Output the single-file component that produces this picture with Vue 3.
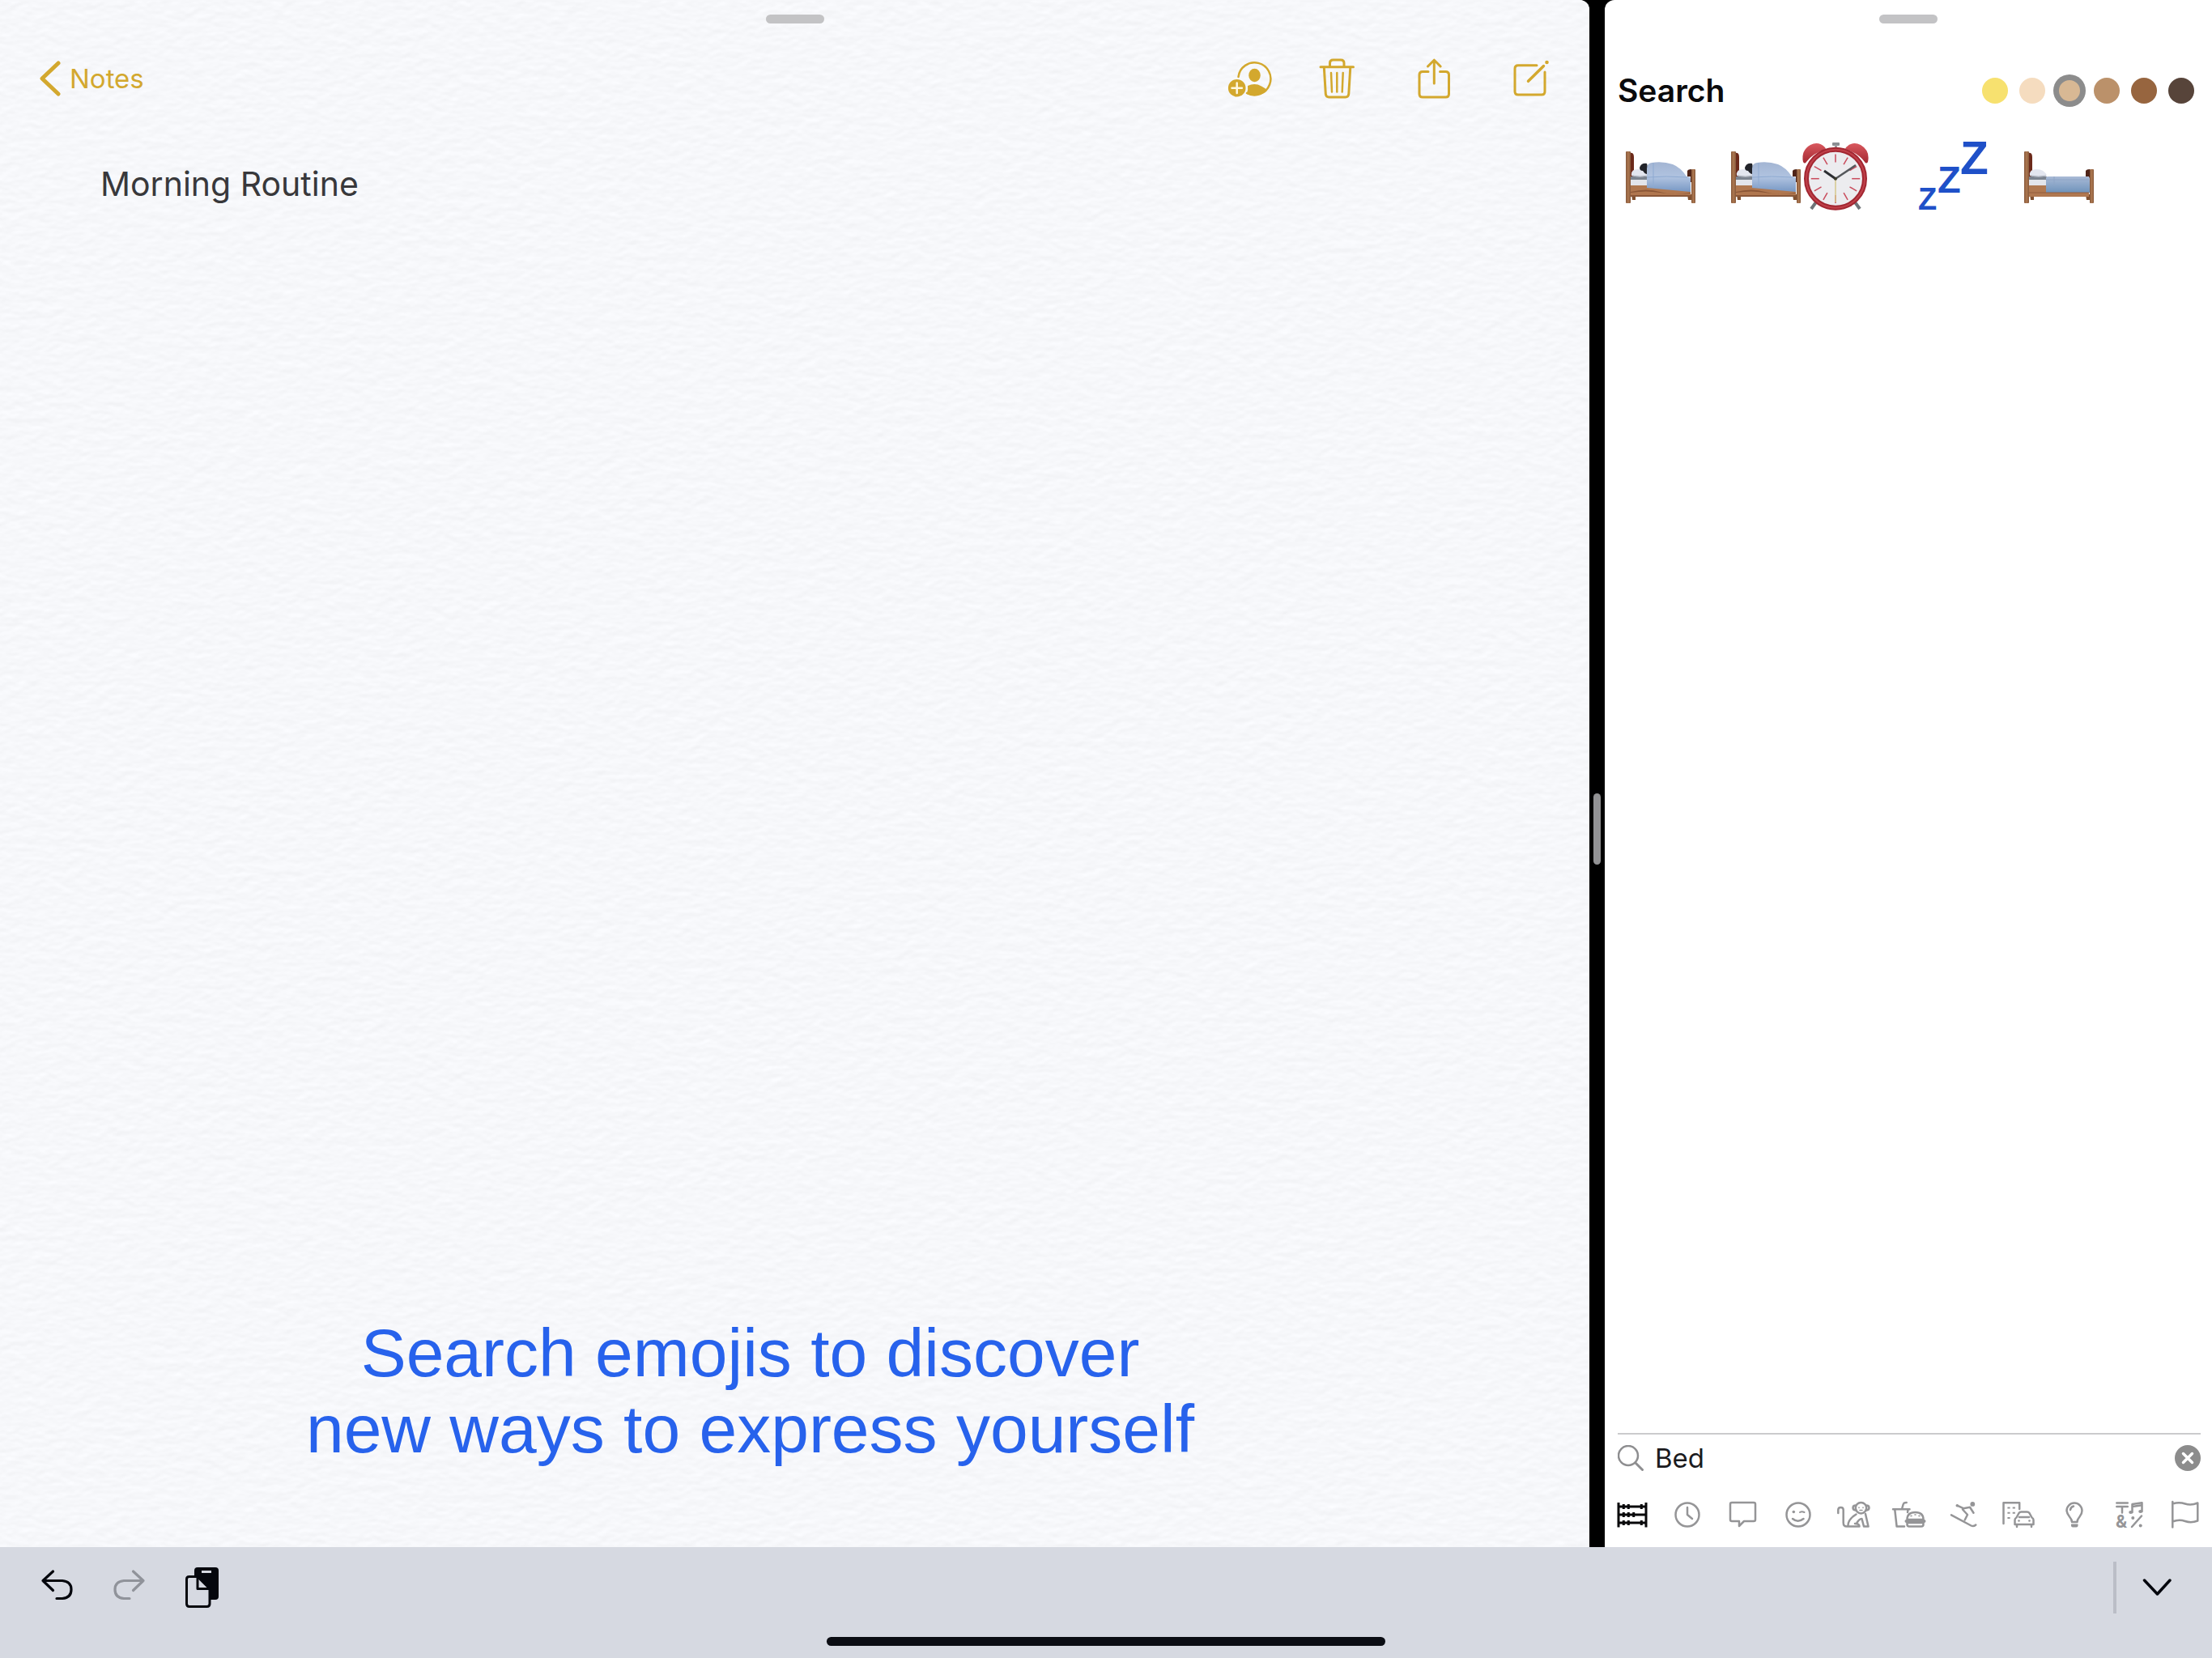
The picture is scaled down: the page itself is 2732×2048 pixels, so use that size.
<script setup>
import { ref } from 'vue'

const query = ref('Bed')
const tone = ref('medium-light')
const category = ref('All')

const tones = [
  { id: 'default', color: '#f7e16f' },
  { id: 'light', color: '#f5dcbf' },
  { id: 'medium-light', color: '#d8b894' },
  { id: 'medium', color: '#bb916a' },
  { id: 'medium-dark', color: '#97653f' },
  { id: 'dark', color: '#57443a' },
]

const clockTicks = Array.from({ length: 12 }, (_, i) => i * 30)

const categories = [
  { name: 'All', body: '<path d="M3 1v30.500M37 1v30.500M3 6h34M3 16h34M3 26h34M9.300 3v6M15.300 3v6M31.300 3v6M9.300 13v6M15.300 13v6M21.700 13v6M9.300 23v6M15.300 23v6M31.300 23v6"/>' },
  { name: 'Recent', body: '<circle cx="20" cy="16" r="14.5"/><path d="M20 7v9l6 5"/>' },
  { name: 'Messages', body: '<path d="M7 1h27q2 0 2 2v19q0 2-2 2H22l-6 6v-6H7q-2 0-2-2V3q0-2 2-2z"/>' },
  { name: 'Smileys', body: '<circle cx="20" cy="16" r="14.5"/><circle cx="14.3" cy="12.5" r="1.8" class="solid"/><path d="M22 13q2.500-1.500 5.500 0" stroke-width="2"/><path d="M13 21q6.500 5.500 13.500 0"/>' },
  { name: 'Animals', body: '<path d="M1.300 14V10Q1.300 7 4.500 7T7.700 10V26Q7.700 30.500 12 30.500H27.500Q27.500 27 22 27M13.500 30Q13 22 23.500 15.500M35 15L38.500 30.500H33L30.500 21Q27 21 24 27"/><circle cx="29.500" cy="7.700" r="6.700"/><path d="M23 4.500q-3.500 0-3.500 3t4 3M36 4.500q3.500 0 3.500 3t-4 3"/><path d="M27 7v.5M32 7v.5M28 10.500h3" stroke-width="1.500"/>' },
  { name: 'Food', body: '<path d="M1 9.300h20.500M12 9l1.700-6q.5-2 4-2M3.300 10l2.300 20.500H15M19.500 10l-.5 3M18.500 22q0-9 10-9t10 9zM18.500 26v2q0 2.500 2.500 2.500h15q2.500 0 2.500-2.500v-2z"/><path d="M17.500 24h22" stroke-width="4"/><path d="M23 17.500h1M28 16h1M33 17.500h1" stroke-width="1.600"/>' },
  { name: 'Activities', body: '<circle cx="31.300" cy="2.900" r="2.900" class="solid"/><circle cx="12.300" cy="4.700" r="1.800" class="solid"/><path d="M12.300 4.700l7.700 3.500 8-1.500 4.500 7M19 9.500l6 6.500-3.300 6.500M5 16.300l24.500 13.200q3 1.500 5.800-1"/>' },
  { name: 'Travel', body: '<path d="M1.500 27V1.300h19.700V9"/><path d="M8 6.500v2M14.300 6.500v2M8 12.700v2M14.300 12.700v2M8 19v2" stroke-width="3.200" stroke-linecap="butt"/><path d="M17.500 19.500l3-5.500q1-1.500 3-1.500h7q2 0 3 1.500l3 5.500q2 1 2 3v5.500H15.500v-5.500Q15.500 20.500 17.500 19.500zM21 19h12M18 28v3M36 28v3"/><circle cx="20.500" cy="23.500" r="1.300" class="solid"/><circle cx="33.500" cy="23.500" r="1.300" class="solid"/>' },
  { name: 'Objects', body: '<path d="M17 25q0-3-3-6.500T10.500 11a9.500 9.500 0 0 1 19 0q0 4-3 7.500T23.500 25zM15 10q.5-3.500 4-4.500"/><path d="M16 27.500h8.500v2q0 2-2 2h-4.500q-2 0-2-2z" class="solid"/>' },
  { name: 'Symbols', body: '<path d="M4.300 1.500h13.500M4.300 6h13.500M11 6v7.500M23.500 13V3l12-1.700V12M23.500 6l12-1.700M35 17.500L23 31"/><ellipse cx="21.700" cy="13" rx="2.500" ry="2" class="solid"/><ellipse cx="33.700" cy="12" rx="2.500" ry="2" class="solid"/><circle cx="24.300" cy="20" r="2" class="solid"/><circle cx="33.700" cy="29.500" r="2" class="solid"/><text x="3" y="31.500" font-size="21" font-weight="700" class="solid">&amp;</text>' },
  { name: 'Flags', body: '<path d="M5.300 0v31.500M5.300 2.500q8-2.500 15.500 0t15.500-1v22q-8 3-15.500 .5t-15.500 .5"/>' },
]
</script>

<template>
  <div class="screen">
    <main class="split">
      <section class="notes">
        <svg class="paper" aria-hidden="true">
          <filter id="paper-grain" x="0" y="0" width="100%" height="100%" color-interpolation-filters="sRGB">
            <feTurbulence type="fractalNoise" baseFrequency="0.06 0.1" numOctaves="2" seed="4" result="n" />
            <feDiffuseLighting in="n" surfaceScale="0.16" diffuseConstant="1.13" lighting-color="#f7f8fb">
              <feDistantLight azimuth="80" elevation="62" />
            </feDiffuseLighting>
          </filter>
          <rect width="100%" height="100%" filter="url(#paper-grain)" />
        </svg>
        <div class="grabber"></div>
        <nav class="notes-nav">
          <a class="back" href="#notes">
            <svg width="28" height="44" viewBox="0 0 28 44"><path d="M24 3L4 22l20 19" stroke-width="5" /></svg>
            <span>Notes</span>
          </a>
          <div class="actions">
            <button type="button" aria-label="Add people">
              <svg width="56" height="48" viewBox="0 0 56 48">
                <path d="M13.500 22A20 20 0 1 1 24 42" stroke-width="2.500" />
                <ellipse class="fill" cx="33.500" cy="20" rx="7.300" ry="8.300" />
                <path class="fill" d="M25 33Q34 29 42 33.500Q46 35.500 48.500 38Q43 45 34 45Q28 45 23.500 43Q26 38 25 33z" />
                <circle class="fill" cx="11.700" cy="35.700" r="10.800" />
                <path d="M11.700 29.500v12.400M5.500 35.700h12.400" stroke="#fff8e0" stroke-width="2.500" />
              </svg>
            </button>
            <div class="action-group">
              <button type="button" aria-label="Delete">
                <svg width="44" height="52" viewBox="0 0 44 52">
                  <path d="M2 11.700h40.500M13.500 11V7q0-4 4-4h9.500q4 0 4 4v4M6.300 12l2 33q.3 4 4 4h20.500q3.700 0 4-4l2-33" stroke-width="3" />
                  <path d="M15 19l1 23.500M22.300 19v23.500M29.700 19l-1 23.500" stroke-width="2.500" />
                </svg>
              </button>
              <button type="button" aria-label="Share">
                <svg width="40" height="52" viewBox="0 0 40 52">
                  <path d="M13 17.500H6q-4 0-4 4V45q0 4 4 4h28.500q4 0 4-4V21.500q0-4-4-4h-7M20.300 32V3.500M12.500 11l7.800-7.800 7.800 7.800" stroke-width="3" />
                </svg>
              </button>
              <button type="button" aria-label="New note">
                <svg width="44" height="48" viewBox="0 0 44 48">
                  <path d="M29 7.700H6q-4 0-4 4V40q0 4 4 4h29q4 0 4-4V16" stroke-width="3" />
                  <path d="M18.500 27.300L37.500 8.500" stroke-width="3.500" />
                  <circle class="fill" cx="41.500" cy="4" r="2.300" />
                </svg>
              </button>
            </div>
          </div>
        </nav>
        <h1 class="note-title">Morning Routine</h1>
        <p class="caption">Search emojis to discover<br />new ways to express yourself</p>
      </section>

      <div class="divider"><span class="handle"></span></div>

      <section class="picker">
        <div class="grabber"></div>
        <header class="picker-head">
          <h2>Search</h2>
          <div class="tones" role="radiogroup" aria-label="Skin tone">
            <input
              v-for="t in tones"
              :key="t.id"
              v-model="tone"
              type="radio"
              name="tone"
              :value="t.id"
              :aria-label="t.id"
              :style="{ backgroundColor: t.color }"
            />
          </div>
        </header>

        <svg class="defs" width="0" height="0" aria-hidden="true">
          <defs>
            <linearGradient id="blanket" x1="0" y1="0" x2="0" y2="1">
              <stop offset="0" stop-color="#a3b5d3" />
              <stop offset="0.5" stop-color="#b0c3e0" />
              <stop offset="1" stop-color="#7898c4" />
            </linearGradient>
            <linearGradient id="blanket-flat" x1="0" y1="0" x2="0" y2="1">
              <stop offset="0" stop-color="#a9bad6" />
              <stop offset="1" stop-color="#6f93bb" />
            </linearGradient>
            <linearGradient id="wood" x1="0" y1="0" x2="1" y2="0">
              <stop offset="0" stop-color="#86583b" />
              <stop offset="0.5" stop-color="#ad7850" />
              <stop offset="1" stop-color="#86583b" />
            </linearGradient>
            <linearGradient id="bell" x1="0" y1="0" x2="0" y2="1">
              <stop offset="0" stop-color="#d9585e" />
              <stop offset="1" stop-color="#a42831" />
            </linearGradient>
            <g id="bed-frame">
              <path d="M9 66h5v7h-4zM78 66h5v7h-4z" fill="#80502f" />
              <path d="M7 15q5-1 5 5v24H7z" fill="#6c2a1a" />
              <path d="M78 37q1-2 5-2v16h-5z" fill="#4f2418" />
              <path d="M8 44h74v21H8z" fill="#e3e5eb" />
              <path d="M8 44h22v4H8z" fill="#7c8490" />
              <path d="M8 55h20l54 7v7H8z" fill="#b0774f" />
              <path d="M8 63q20-5 36 0t38 1v1q-22 2-38-1t-36 0z" fill="#8b5636" />
              <path d="M8 67h74v2H8z" fill="#8a5738" />
              <rect x="2" y="13" width="6" height="64" rx="1" fill="url(#wood)" />
              <rect x="83" y="35" width="5" height="42" rx="1" fill="url(#wood)" />
            </g>
            <g id="pillow">
              <path d="M9 43q-1-8 8-8 10 0 13 8-10 3-21 0z" fill="#e3e6ef" />
              <path d="M10 43q10 2 19 0" fill="none" stroke="#a9afbb" />
            </g>
            <g id="sleeper">
              <use href="#bed-frame" />
              <use href="#pillow" />
              <path d="M19 33q2-6 9-5l3 14q-6-1-8-5-4 0-4-4z" fill="#22242a" />
              <path d="M28 34q0-6 6-7 14-2 26 2 10 4 17 15 5 0 5 4v15L28 58z" fill="url(#blanket)" />
              <path d="M28 45q24-2 50 0M36 27v31" fill="none" stroke="#8eaad1" stroke-width="1" />
            </g>
          </defs>
        </svg>

        <div class="results">
          <button type="button" aria-label="Person in bed">
            <svg width="88" height="88" viewBox="0 0 88 88"><use href="#sleeper" /></svg>
          </button>
          <button type="button" class="wide" aria-label="Person in bed and alarm clock">
            <svg width="88" height="88" viewBox="0 0 88 88"><use href="#sleeper" /></svg>
            <svg width="88" height="88" viewBox="0 0 88 88">
              <path d="M21 73l-8 11M65 73l8 11" stroke="#6f7478" stroke-width="4" />
              <rect x="39" y="2" width="9" height="4" rx="1" fill="#8b8e92" />
              <path d="M42 5h3v6h-3z" fill="#9a9ea2" />
              <path d="M3 26Q0 12 12 5 22 0 30 8l1 2Q14 16 7 26q-2 3-4 0z" fill="url(#bell)" />
              <path d="M83 26q3-14-9-21-10-5-18 3l-1 2q17 6 24 16 2 3 4 0z" fill="url(#bell)" />
              <circle cx="43" cy="46.700" r="36" fill="#ececef" stroke="#a22732" stroke-width="6" />
              <circle cx="43" cy="46.700" r="36" fill="none" stroke="#c0414a" stroke-width="2" />
              <path
                v-for="a in clockTicks"
                :key="a"
                d="M43 16.500v10"
                stroke="#c94b5c"
                stroke-width="1.500"
                :transform="`rotate(${a} 43 46.700)`"
              />
              <path d="M43 46.700V76" stroke="#d6c98c" stroke-width="1.500" />
              <path d="M43 46.700L68 30" stroke="#55585c" stroke-width="2.500" />
              <path d="M43 46.700L29 37" stroke="#2b2d31" stroke-width="3" />
              <circle cx="43" cy="46.700" r="2" fill="#3a3a2c" />
            </svg>
          </button>
          <button type="button" aria-label="Sleeping symbol">
            <svg class="zzz" width="88" height="88" viewBox="0 0 88 88">
              <text x="1" y="85" font-size="38">Z</text>
              <text x="25" y="64" font-size="47">Z</text>
              <text x="53" y="41" font-size="57">Z</text>
            </svg>
          </button>
          <button type="button" aria-label="Bed">
            <svg width="88" height="88" viewBox="0 0 88 88">
              <use href="#bed-frame" />
              <use href="#pillow" />
              <path d="M29 45q1-1 3-1h48q3 0 3 3v17H29z" fill="url(#blanket-flat)" />
              <path d="M29 48h53M39 44v10" fill="none" stroke="#8ea5c6" stroke-width="1" />
              <path d="M8 55h21v9h53v5H8z" fill="#b07850" />
              <path d="M8 64h74" stroke="#925d3c" stroke-width="1" />
            </svg>
          </button>
        </div>

        <footer class="picker-foot">
          <form class="search" @submit.prevent>
            <label for="emoji-query" aria-label="Search emojis">
              <svg width="32" height="32" viewBox="0 0 32 32"><circle cx="13" cy="13" r="12" stroke-width="2.500" /><path d="M22 22l8.500 8.500" stroke-width="3" /></svg>
            </label>
            <input id="emoji-query" v-model="query" type="text" autocomplete="off" />
            <button type="button" aria-label="Clear" @click="query = ''">
              <svg width="32" height="32" viewBox="0 0 32 32"><circle cx="16" cy="16" r="16" fill="#8c8c8c" stroke="none" /><path d="M10.500 10.500l11 11M21.500 10.500l-11 11" stroke="#fff" stroke-width="3.500" /></svg>
            </button>
          </form>
          <div class="categories">
            <button
              v-for="c in categories"
              :key="c.name"
              type="button"
              :class="{ active: c.name === category }"
              :aria-label="c.name"
              @click="category = c.name"
            >
              <svg width="40" height="32" viewBox="0 0 40 32" v-html="c.body"></svg>
            </button>
          </div>
        </footer>
      </section>
    </main>

    <footer class="bar">
      <div class="bar-row">
        <button type="button" aria-label="Undo">
          <svg width="40" height="48" viewBox="0 0 40 48"><path d="M15.500 4L3 15.500 15.500 27.500M3 15.500H27q11 1 11 11t-11 11h-7" stroke-width="3.200" /></svg>
        </button>
        <button type="button" class="dim" aria-label="Redo">
          <svg width="40" height="48" viewBox="0 0 40 48"><path d="M24.500 4L37 15.500 24.500 27.500M37 15.500H13q-11 1-11 11t11 11h7" stroke-width="3.200" /></svg>
        </button>
        <button type="button" aria-label="Paste">
          <svg width="42" height="52" viewBox="0 0 42 52">
            <path d="M15 1h22q4 0 4 4v32q0 4-4 4H11V5q0-4 4-4z" fill="#05070d" stroke="none" />
            <path d="M20 5h12v3H20z" fill="#d6d9e1" stroke="none" />
            <path d="M4 12.500h11L30 27.500V46q0 3.500-3.500 3.500H5Q1.500 49.500 1.500 46V15.500q0-3 3-3z" fill="#d6d9e1" stroke-width="3" />
            <path d="M15 13v14.500h14" stroke-width="3" />
          </svg>
        </button>
        <span class="separator"></span>
        <button type="button" aria-label="Hide keyboard">
          <svg width="36" height="24" viewBox="0 0 36 24"><path d="M2.500 3L18.500 20 34 3" stroke-width="3.500" /></svg>
        </button>
      </div>
      <div class="home-indicator"></div>
    </footer>
  </div>
</template>

<style>
body {
  margin: 0;
}
</style>

<style scoped>
.screen {
  display: flex;
  flex-direction: column;
  min-height: 100vh;
  background: #000;
  font-family: Inter, "Liberation Sans", sans-serif;
}
button {
  display: flex;
  align-items: center;
  justify-content: center;
  margin: 0;
  padding: 0;
  border: 0;
  background: none;
  color: inherit;
  font: inherit;
  cursor: pointer;
}
svg {
  display: block;
  flex: none;
}
.split {
  flex: 1;
  display: flex;
}
.notes,
.picker {
  position: relative;
  display: flex;
  flex-direction: column;
  min-width: 0;
  padding-top: 18px;
  overflow: hidden;
}
.notes {
  flex: 1963 1 0;
  border-top-right-radius: 12px;
  background: #f7f8fa;
  color: #d3a82e;
  isolation: isolate;
}
.picker {
  flex: 750 1 0;
  border-top-left-radius: 12px;
  background: #fff;
}
.paper {
  position: absolute;
  inset: 0;
  z-index: -1;
  width: 100%;
  height: 100%;
}
.grabber {
  flex: none;
  align-self: center;
  width: 72px;
  height: 11px;
  border-radius: 6px;
  background: #c3c3c5;
}
.notes-nav {
  display: flex;
  align-items: center;
  justify-content: space-between;
  height: 96px;
  margin-top: 20px;
  padding: 0 50px 0 48px;
}
.notes-nav svg {
  fill: none;
  stroke: currentColor;
  stroke-linecap: round;
  stroke-linejoin: round;
}
.notes-nav .fill {
  fill: currentColor;
  stroke: none;
}
.back {
  display: flex;
  align-items: center;
  gap: 10px;
  color: inherit;
  font-size: 33px;
  line-height: 44px;
  text-decoration: none;
}
.actions {
  display: flex;
  align-items: center;
  gap: 57px;
}
.action-group {
  display: flex;
  align-items: center;
  gap: 78px;
}
.note-title {
  margin: 57px 124px 0;
  color: #38383b;
  font-size: 41px;
  font-weight: 400;
  line-height: 50px;
}
.caption {
  margin: auto 110px 99px 0;
  color: #2762ec;
  font-family: "Liberation Sans", Arial, sans-serif;
  font-size: 84px;
  line-height: 94px;
  text-align: center;
}
.divider {
  flex: none;
  display: flex;
  align-items: center;
  justify-content: center;
  width: 19px;
}
.handle {
  width: 9px;
  height: 88px;
  margin-top: 136px;
  border-radius: 5px;
  background: #929294;
}
.picker-head {
  display: flex;
  align-items: center;
  justify-content: space-between;
  height: 64px;
  margin-top: 51px;
  padding: 0 22px 0 16px;
}
.picker-head h2 {
  margin: 0;
  color: #0a0a0c;
  font-size: 39px;
  font-weight: 600;
  line-height: 46px;
}
.tones {
  display: flex;
  gap: 14px;
}
.tones input {
  appearance: none;
  box-sizing: border-box;
  width: 32px;
  height: 32px;
  margin: 0;
  border-radius: 50%;
}
.tones input:checked {
  border: 3px solid #8c8c8c;
  box-shadow: 0 0 0 4px #8c8c8c;
}
.defs {
  position: absolute;
}
.results {
  display: flex;
  gap: 42px;
  margin-top: 30px;
  padding: 0 24px;
}
.results .wide {
  justify-content: flex-start;
  width: 190px;
}
.zzz {
  overflow: visible;
}
.zzz text {
  fill: #1f50c8;
  font-family: "Liberation Sans", Arial, sans-serif;
  font-weight: 700;
}
.picker-foot {
  margin-top: auto;
}
.picker-foot svg {
  fill: none;
  stroke: currentColor;
  stroke-linecap: round;
  stroke-linejoin: round;
}
.search {
  display: flex;
  align-items: center;
  gap: 14px;
  height: 58px;
  margin: 0 14px 0 16px;
  border-top: 2px solid #cbcbcd;
  color: #8e8e90;
}
.search input {
  flex: 1;
  min-width: 0;
  padding: 0;
  border: 0;
  outline: 0;
  background: none;
  color: #1b1b1e;
  font-family: inherit;
  font-size: 33px;
  line-height: 40px;
}
.categories {
  display: flex;
  height: 81px;
  color: #959597;
}
.categories button {
  flex: 1;
}
.categories svg {
  overflow: visible;
  stroke-width: 2.5px;
}
.categories .active {
  color: #08080a;
}
.categories .active svg {
  stroke-width: 3px;
  stroke-linecap: butt;
}
.categories :deep(.solid) {
  fill: currentColor;
  stroke: none;
}
.bar {
  display: flex;
  flex-direction: column;
  align-items: center;
  padding-bottom: 15px;
  background: #d6d9e1;
  color: #05070d;
}
.bar-row {
  display: flex;
  align-items: center;
  align-self: stretch;
  height: 99px;
  padding: 0 23px 0 25px;
}
.bar-row button {
  width: 90px;
  height: 64px;
}
.bar-row svg {
  fill: none;
  stroke: currentColor;
  stroke-linecap: round;
  stroke-linejoin: round;
}
.bar-row .dim {
  color: #90939a;
}
.separator {
  width: 4px;
  height: 64px;
  margin: 0 5px 0 auto;
  background: #bbbec7;
}
.home-indicator {
  width: 690px;
  height: 11px;
  margin-top: 12px;
  border-radius: 6px;
  background: #0b0d13;
}
</style>
